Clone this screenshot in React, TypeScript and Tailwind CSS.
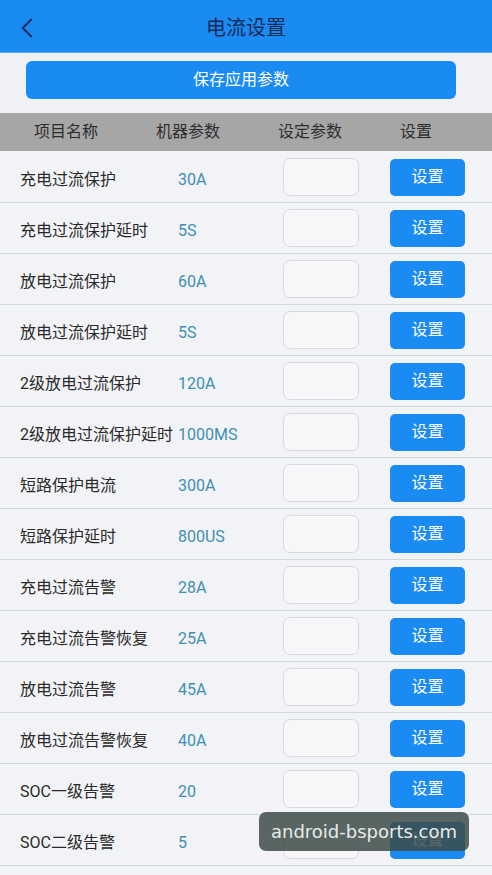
import { ChevronLeft } from "lucide-react";

const rows = [
  { name: "充电过流保护", value: "30A" },
  { name: "充电过流保护延时", value: "5S" },
  { name: "放电过流保护", value: "60A" },
  { name: "放电过流保护延时", value: "5S" },
  { name: "2级放电过流保护", value: "120A" },
  { name: "2级放电过流保护延时", value: "1000MS" },
  { name: "短路保护电流", value: "300A" },
  { name: "短路保护延时", value: "800US" },
  { name: "充电过流告警", value: "28A" },
  { name: "充电过流告警恢复", value: "25A" },
  { name: "放电过流告警", value: "45A" },
  { name: "放电过流告警恢复", value: "40A" },
  { name: "SOC一级告警", value: "20" },
  { name: "SOC二级告警", value: "5" },
];

const font = "font-['Roboto','Noto_Sans_CJK_SC',sans-serif]";

export default function App() {
  return (
    <div className={`relative w-[492px] h-[875px] overflow-hidden bg-[#f3f4f7] ${font}`}>
      <header className="relative h-[53px] bg-[#1a8bf2] flex items-center justify-center border-b border-[#5aa9f0]">
        <ChevronLeft size={34} strokeWidth={1.4} className="absolute left-[10px] top-[11px] text-[#1b2a63]" />
        <h1 className="pt-[3px] text-[20px] font-normal text-[#172a55]">电流设置</h1>
      </header>

      <div className="px-[26px] pt-[8px] pb-[14px] bg-[#eff1f5]">
        <button className="w-[430px] h-[38px] rounded-[6px] bg-[#1a8bf2] text-white text-[16px]">
          保存应用参数
        </button>
      </div>

      <div className="h-[38px] bg-[#a6a6a6] flex items-center text-[16px] text-[#2d2d2d]">
        <span className="w-[156px] pl-[34px]">项目名称</span>
        <span className="w-[122px]">机器参数</span>
        <span className="w-[122px]">设定参数</span>
        <span>设置</span>
      </div>

      <div className="flex flex-col pt-[1px]">
        {rows.map((r) => (
          <div key={r.name} className="h-[51px] flex items-center border-b border-[#d3d6db] bg-[#f2f3f6]">
            <span className="w-[178px] pl-[20px] pt-[6px] text-[16px] text-[#2a2a2a] whitespace-nowrap">{r.name}</span>
            <span className="w-[105px] pt-[6px] text-[16px] text-[#3f8fb5]">{r.value}</span>
            <div className="w-[76px] h-[38px] rounded-[7px] border border-[#d7d9dd] bg-[#f6f7f9]" />
            <button className="ml-[31px] w-[75px] h-[37px] rounded-[5px] bg-[#1a8bf2] text-white text-[16px]">
              设置
            </button>
          </div>
        ))}
      </div>

      <div className="absolute left-[259px] top-[812px] w-[210px] h-[39px] rounded-[7px] bg-[#3d4b48]/85 flex items-center justify-center">
        <span className="text-[18px] text-[#e8ece9] font-['DejaVu_Sans',sans-serif]">android-bsports.com</span>
      </div>
    </div>
  );
}
